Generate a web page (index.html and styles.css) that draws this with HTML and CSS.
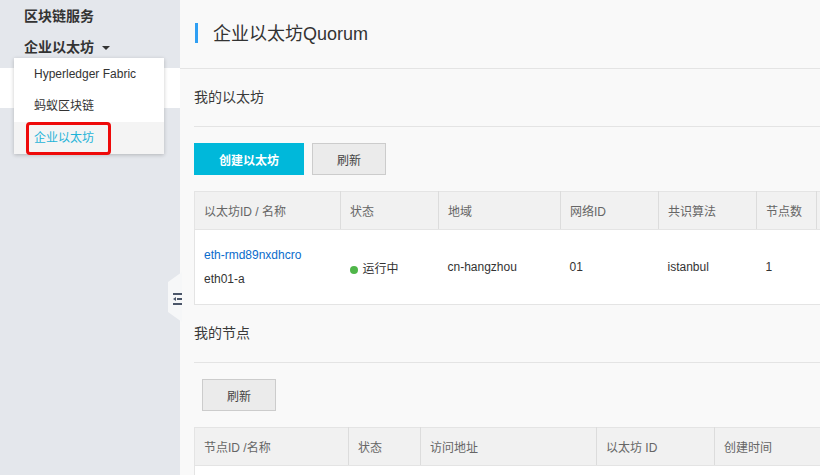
FILE: index.html
```html
<!DOCTYPE html>
<html lang="zh-CN">
<head>
<meta charset="utf-8">
<title>企业以太坊Quorum</title>
<link rel="stylesheet" href="styles.css">
</head>
<body>
<div class="app">
  <aside class="sidebar">
    <div class="side-title">区块链服务</div>
    <div class="side-group">企业以太坊<span class="caret"></span></div>
    <div class="side-band"></div>
    <div class="dropdown">
      <div class="dd-item">Hyperledger Fabric</div>
      <div class="dd-item">蚂蚁区块链</div>
      <div class="dd-item dd-active">企业以太坊</div>
      <div class="highlight-box"></div>
    </div>
  </aside>
  <div class="collapse-handle">
    <svg class="collapse-icon" width="9" height="12" viewBox="0 0 9 12">
      <rect x="0" y="0" width="9" height="2" fill="#4b5669"/>
      <polygon points="0,6 3,4 3,8" fill="#4b5669"/>
      <rect x="4" y="5" width="5" height="2" fill="#4b5669"/>
      <rect x="0" y="10" width="9" height="2" fill="#4b5669"/>
    </svg>
  </div>
  <main class="main">
    <div class="page-head">
      <span class="head-bar"></span>
      <h1 class="page-title">企业以太坊Quorum</h1>
    </div>
    <div class="content">
      <div class="section-title">我的以太坊</div>
      <div class="toolbar">
        <button class="btn btn-primary">创建以太坊</button>
        <button class="btn btn-default">刷新</button>
      </div>
      <table class="grid grid-eth">
        <colgroup>
          <col style="width:146px"><col style="width:98px"><col style="width:122px"><col style="width:98px"><col style="width:98px"><col style="width:60px"><col style="width:80px">
        </colgroup>
        <thead>
          <tr><th>以太坊ID / 名称</th><th>状态</th><th>地域</th><th>网络ID</th><th>共识算法</th><th>节点数</th><th></th></tr>
        </thead>
        <tbody>
          <tr class="row-eth">
            <td><div class="cell-line"><a class="link" href="#">eth-rmd89nxdhcro</a></div><div class="cell-line">eth01-a</div></td>
            <td><span class="dot"></span>运行中</td>
            <td>cn-hangzhou</td>
            <td>01</td>
            <td>istanbul</td>
            <td>1</td>
            <td></td>
          </tr>
        </tbody>
      </table>
      <div class="section-title">我的节点</div>
      <div class="toolbar toolbar-indent">
        <button class="btn btn-default">刷新</button>
      </div>
      <table class="grid grid-node">
        <colgroup>
          <col style="width:154px"><col style="width:72px"><col style="width:176px"><col style="width:118px"><col style="width:180px">
        </colgroup>
        <thead>
          <tr><th>节点ID /名称</th><th>状态</th><th>访问地址</th><th>以太坊 ID</th><th>创建时间</th></tr>
        </thead>
        <tbody>
          <tr class="row-node"><td></td><td></td><td></td><td></td><td></td></tr>
        </tbody>
      </table>
    </div>
  </main>
</div>
</body>
</html>
```
FILE: styles.css
```css
* { box-sizing: border-box; }
html, body {
  margin: 0;
  padding: 0;
  width: 820px;
  height: 475px;
  overflow: hidden;
  font-family: "Liberation Sans", "Noto Sans CJK SC", sans-serif;
  color: #333;
}
.app {
  display: flex;
  width: 820px;
  height: 475px;
  position: relative;
}
.sidebar {
  width: 180px;
  flex: 0 0 180px;
  background: #e4e7ec;
  position: relative;
}
.side-title {
  height: 32px;
  line-height: 32px;
  padding-left: 24px;
  font-size: 14px;
  font-weight: bold;
  color: #333;
}
.side-group {
  height: 36px;
  line-height: 30px;
  padding-left: 24px;
  font-size: 14px;
  font-weight: bold;
  color: #333;
  display: flex;
  align-items: center;
  padding-bottom: 6px;
}
.caret {
  display: inline-block;
  width: 0;
  height: 0;
  margin-left: 8px;
  margin-top: 1px;
  border-left: 4px solid transparent;
  border-right: 4px solid transparent;
  border-top: 4px solid #333;
}
.side-band {
  height: 40px;
  background: #fff;
}
.dropdown {
  position: absolute;
  left: 14px;
  top: 58px;
  width: 150px;
  background: #fff;
  box-shadow: 0 1px 4px rgba(0, 0, 0, 0.22);
  z-index: 5;
}
.dd-item {
  height: 32px;
  line-height: 32px;
  padding-left: 20px;
  font-size: 12px;
  color: #333;
}
.dd-active {
  background: #f4f4f4;
  color: #1fb3d8;
}
.highlight-box {
  position: absolute;
  left: 12px;
  top: 64px;
  width: 85px;
  height: 33px;
  border: 3px solid #ee0a0a;
  border-radius: 4px;
}
.collapse-handle {
  position: absolute;
  left: 168px;
  top: 272px;
  width: 14px;
  height: 50px;
  background: #f6f7f8;
  clip-path: polygon(0 10px, 100% 0, 100% 100%, 0 calc(100% - 10px));
  z-index: 4;
}
.collapse-icon {
  position: absolute;
  left: 5px;
  top: 21px;
}
.main {
  flex: 1;
  background: #f9f9f9;
  overflow: hidden;
  min-width: 0;
}
.page-head {
  height: 69px;
  border-bottom: 1px solid #e4e4e4;
  display: flex;
  align-items: center;
  padding-left: 15px;
  padding-bottom: 3px;
}
.head-bar {
  width: 3px;
  height: 20px;
  background: #2f9ff3;
}
.page-title {
  margin: 0 0 2px 15px;
  font-size: 18px;
  font-weight: normal;
  color: #333;
}
.content {
  padding-left: 14px;
  width: 780px;
}
.section-title {
  height: 58px;
  line-height: 57px;
  border-bottom: 1px solid #e4e4e4;
  font-size: 14px;
  color: #3a3a3a;
}
.toolbar {
  display: flex;
  gap: 8px;
  padding: 16px 0;
}
.toolbar-indent {
  padding-left: 8px;
}
.btn {
  height: 32px;
  font-family: inherit;
  font-size: 12px;
  border-radius: 0;
  cursor: pointer;
  padding: 0;
}
.btn-primary {
  width: 110px;
  background: #00b8da;
  border: 1px solid #00b8da;
  color: #fff;
  font-weight: bold;
}
.btn-default {
  width: 74px;
  background: #ebebeb;
  border: 1px solid #cccccc;
  color: #444;
}
.grid {
  border-collapse: collapse;
  table-layout: fixed;
  font-size: 12px;
  border: 1px solid #e4e4e4;
}
.grid-eth { width: 702px; }
.grid-node { width: 700px; }
.grid th {
  height: 38px;
  padding: 0 0 0 9px;
  text-align: left;
  font-weight: normal;
  color: #666;
  background: #f1f1f1;
  border-right: 1px solid #dcdcdc;
  border-bottom: 1px solid #e4e4e4;
}
.grid td {
  background: #fff;
  padding: 0 0 0 9px;
  vertical-align: middle;
  color: #333;
}
.row-eth td {
  height: 75px;
}
.row-node td {
  height: 30px;
}
.cell-line {
  line-height: 24px;
}
.link {
  color: #0a6ccc;
  text-decoration: none;
}
.dot {
  display: inline-block;
  width: 8px;
  height: 8px;
  border-radius: 50%;
  background: #4fb649;
  margin-right: 5px;
  vertical-align: -1px;
}
```
